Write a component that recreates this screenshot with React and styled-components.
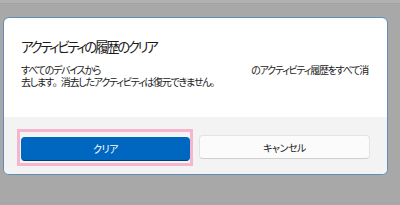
import React from "react";
import styled, { createGlobalStyle } from "styled-components";

const Global = createGlobalStyle`
  html, body {
    margin: 0;
    padding: 0;
    background: #a8a8a8;
  }
  body {
    font-family: "Noto Sans CJK JP", "Noto Sans", sans-serif;
    font-feature-settings: "palt";
  }
`;

const Screen = styled.div`
  width: 400px;
  height: 205px;
  background: #a8a8a8;
  position: relative;
  overflow: hidden;
`;

const TopStrip = styled.div`
  height: 3px;
  background: #b2b2b2;
  border-bottom: 1px solid #a2a2a2;
`;

const Dialog = styled.div`
  position: absolute;
  left: 3px;
  top: 17px;
  width: 383px;
  height: 156px;
  background: #ffffff;
  border: 1px solid #5f8db8;
  border-radius: 6px;
  display: flex;
  flex-direction: column;
  overflow: hidden;
`;

const Content = styled.div`
  flex: 1;
  padding: 19px 17px 0 17px;
`;

const Title = styled.h1`
  margin: 0 0 8px 0;
  font-size: 13.5px;
  font-weight: 400;
  color: #1b1b1b;
  line-height: 19px;
  letter-spacing: -2.4px;
  white-space: nowrap;
`;

const Body = styled.p`
  margin: 0;
  font-size: 10px;
  line-height: 12px;
  color: #1b1b1b;
  letter-spacing: -1.25px;
  white-space: nowrap;
`;

const Punct = styled.span`
  font-feature-settings: normal;
  letter-spacing: -2px;
`;

const Gap = styled.span`
  display: inline-block;
  width: ${(p) => p.$w}px;
`;

const Footer = styled.div`
  height: 57px;
  background: #f3f3f3;
  display: grid;
  grid-template-columns: 176px 171px;
  column-gap: 6px;
  padding: 12px 0 0 13px;
  box-sizing: border-box;
  align-items: start;
`;

const Focus = styled.div`
  height: 37px;
  box-sizing: border-box;
  border: 3px solid #f4b5cf;
  padding: 2px 0 0 1px;
`;

const Button = styled.button`
  width: ${(p) => p.$w}px;
  height: 24px;
  border-radius: 4px;
  font-family: inherit;
  font-feature-settings: "palt";
  font-size: 10px;
  letter-spacing: -0.5px;
  cursor: pointer;
  background: ${(p) => (p.$primary ? "#0067c0" : "#fbfbfb")};
  color: ${(p) => (p.$primary ? "#ffffff" : "#1b1b1b")};
  border: 1px solid ${(p) => (p.$primary ? "#0067c0" : "#e3e3e3")};
  border-bottom-color: ${(p) => (p.$primary ? "#003e73" : "#cfcfcf")};
  margin-top: ${(p) => (p.$primary ? 0 : 6)}px;
`;

export default function App() {
  return (
    <>
      <Global />
      <Screen>
        <TopStrip />
        <Dialog>
          <Content>
            <Title>アクティビティの履歴のクリア</Title>
            <Body>
              すべてのデバイスから
              <Gap $w={151} />
              のアクティビティ履歴をすべて消
              <br />
              去します<Punct>。</Punct>消去したアクティビティは復元できません<Punct>。</Punct>
            </Body>
          </Content>
          <Footer>
            <Focus>
              <Button $primary $w={169}>クリア</Button>
            </Focus>
            <Button $w={171}>キャンセル</Button>
          </Footer>
        </Dialog>
      </Screen>
    </>
  );
}
